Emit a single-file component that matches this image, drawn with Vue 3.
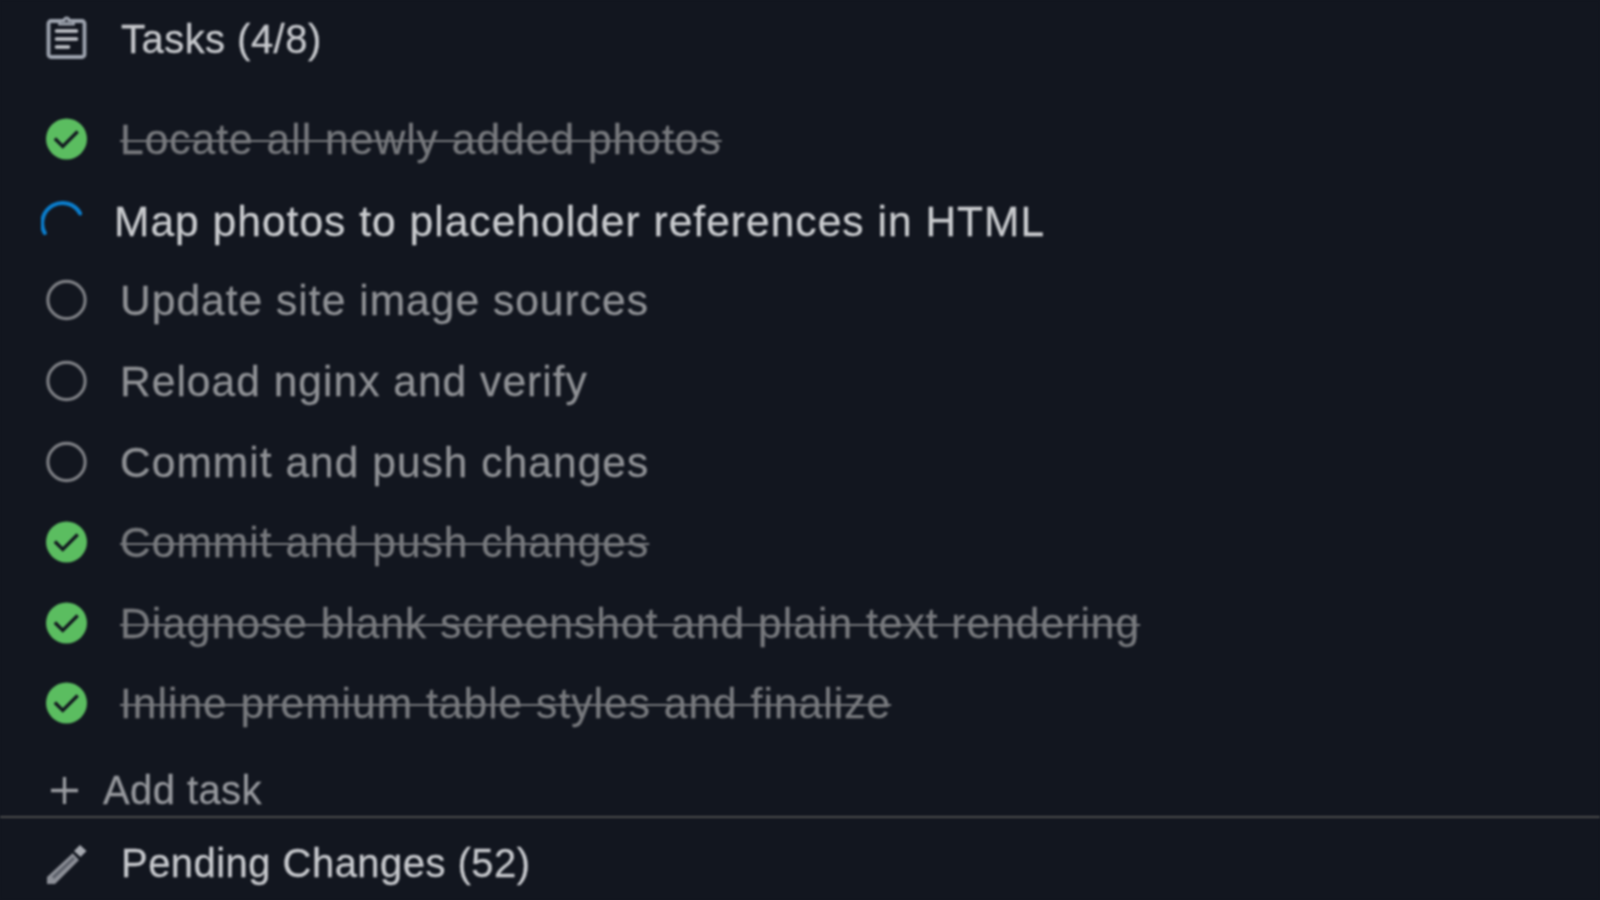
<script setup>
const tareas = [
  { id: 1, texto: "Locate all newly added photos", estado: "hecha" },
  { id: 2, texto: "Map photos to placeholder references in HTML", estado: "activa" },
  { id: 3, texto: "Update site image sources", estado: "pendiente" },
  { id: 4, texto: "Reload nginx and verify", estado: "pendiente" },
  { id: 5, texto: "Commit and push changes", estado: "pendiente" },
  { id: 6, texto: "Commit and push changes", estado: "hecha" },
  { id: 7, texto: "Diagnose blank screenshot and plain text rendering", estado: "hecha" },
  { id: 8, texto: "Inline premium table styles and finalize", estado: "hecha" },
];
</script>

<template>
  <div class="panel">
    <section class="tareas">
      <header class="cabecera">
        <svg class="icono" viewBox="0 0 40 44" fill="none" stroke="#9da3ae" stroke-width="3.8">
          <path d="M13 6H4.5A2.5 2.5 0 0 0 2 8.5v31A2.5 2.5 0 0 0 4.5 42h31a2.5 2.5 0 0 0 2.5-2.5v-31A2.5 2.5 0 0 0 35.5 6H27" />
          <path d="M13 9V5.5h4.5a2.5 2.5 0 0 1 5 0H27V9z" fill="#2b2f38" stroke-width="2.8" />
          <path d="M10 16h20M10 24h20M10 32h12" stroke="#c2c5cb" stroke-linecap="round" stroke-width="3.6" />
        </svg>
        <span class="titulo">Tasks (4/8)</span>
      </header>

      <ul class="lista">
        <li v-for="t in tareas" :key="t.id" class="fila" :class="t.estado">
          <svg v-if="t.estado === 'hecha'" class="icono" viewBox="0 0 44 44">
            <circle cx="22" cy="22" r="22" fill="#5bbd60" />
            <path d="M9.5 21.5l8.5 8.500 16-16" fill="none" stroke="#12161f" stroke-width="3.6" />
          </svg>
          <svg v-else-if="t.estado === 'activa'" class="icono" viewBox="0 0 44 44">
            <path d="M4 36A20.5 20.5 0 0 1 42 15" fill="none" stroke="#0b7dcc" stroke-width="4.4" stroke-linecap="round" />
          </svg>
          <svg v-else class="icono" viewBox="0 0 44 44">
            <circle cx="22" cy="22" r="20" fill="none" stroke="#7d7f84" stroke-width="3.4" />
          </svg>
          <span class="texto">{{ t.texto }}</span>
        </li>
      </ul>

      <button class="agregar">
        <svg class="mas" viewBox="0 0 30 30" stroke="#9a9ca1" stroke-width="3.4">
          <path d="M15 1v28M1 15h28" />
        </svg>
        Add task
      </button>
    </section>

    <footer class="pendientes">
      <svg class="lapiz" viewBox="0 0 41 40">
        <path d="M1 32L26.700 8.300 33 15 9 39H1z" fill="#8d9098" />
        <path d="M6 31.500L27 12l2 2L8 34z" fill="#5c606a" />
        <path d="M28 6l6-6 6.500 6-6 6z" fill="#a6a9b0" />
      </svg>
      <span class="titulo">Pending Changes (52)</span>
    </footer>
  </div>
</template>

<style scoped>
.panel {
  width: 1600px;
  height: 900px;
  overflow: hidden;
  background: #12161f;
  font-family: "Liberation Sans", Arial, sans-serif;
  font-size: 40px;
  letter-spacing: 0.46px;
  -webkit-text-stroke: 0.3px;
  filter: blur(0.9px);
}

.tareas {
  height: 816px;
  border-bottom: 2px solid #4a4b4c;
}

.cabecera {
  display: flex;
  align-items: center;
  gap: 34px;
  height: 78px;
  padding-left: 46px;
}

.cabecera .icono {
  margin-top: -4px;
}

.titulo {
  color: #c6c8cc;
}

.icono {
  flex: none;
  width: 41px;
  height: 44px;
}

.lista {
  list-style: none;
  margin: 0;
  padding: 21px 0 0;
}

.fila {
  display: flex;
  align-items: center;
  gap: 33px;
  height: 80.6px;
  padding-left: 46px;
  font-size: 42.5px;
  letter-spacing: 1.03px;
}

.texto {
  padding-top: 2px;
}

.fila.hecha .texto {
  color: #77797d;
  text-decoration: line-through;
  text-decoration-thickness: 2px;
}

.fila.pendiente .texto {
  color: #8f9195;
}

.fila.activa {
  padding-left: 41px;
  gap: 32px;
}

.fila.activa .texto {
  padding-top: 4px;
  color: #c9cbce;
}

.agregar {
  display: flex;
  align-items: center;
  gap: 24px;
  height: 50px;
  margin-top: 22px;
  padding: 0 0 0 50px;
  border: 0;
  background: none;
  color: #96989d;
  font: inherit;
  letter-spacing: 0.4px;
}

.mas {
  width: 29px;
  height: 29px;
}

.pendientes {
  display: flex;
  align-items: center;
  gap: 34px;
  height: 90px;
  padding-left: 46px;
}

.lapiz {
  flex: none;
  width: 41px;
  height: 40px;
  margin-top: 4px;
}
</style>

<style>
html,
body {
  margin: 0;
  background: #12161f;
}
</style>
